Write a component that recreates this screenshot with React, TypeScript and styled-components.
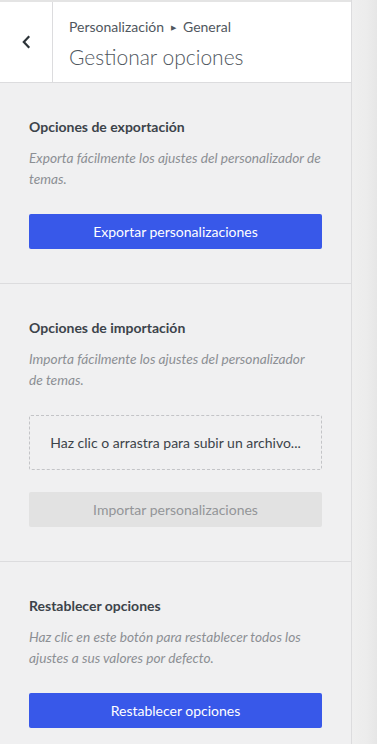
import * as React from "react";
import styled, { createGlobalStyle } from "styled-components";

const GlobalStyle = createGlobalStyle`
  html, body {
    margin: 0;
    padding: 0;
    height: 100%;
  }
  body {
    font-family: Lato, "Noto Sans", sans-serif;
    background: #eeeeee;
  }
  #root {
    height: 100%;
  }
`;

const Layout = styled.div`
  display: flex;
  height: 100%;
  overflow: hidden;
`;

const Sidebar = styled.aside`
  width: 351px;
  flex-shrink: 0;
  background: #f0f0f1;
  border-right: 1px solid #dcdcde;
  display: flex;
  flex-direction: column;
  & > * {
    flex-shrink: 0;
  }
`;

const Preview = styled.div`
  flex: 1;
  background: linear-gradient(90deg, #efefef 0%, #ececec 60%, #e6e6e6 100%);
`;

const Header = styled.header`
  display: flex;
  height: 80px;
  background: #fff;
  border-top: 2px solid #e4e4e4;
  border-bottom: 1px solid #dcdcde;
`;

const BackButton = styled.button`
  width: 53px;
  flex-shrink: 0;
  border: none;
  border-right: 1px solid #dcdcde;
  background: #fff;
  display: flex;
  align-items: center;
  justify-content: center;
  padding: 0;
  cursor: pointer;
`;

const TitleBlock = styled.div`
  display: flex;
  flex-direction: column;
  justify-content: center;
  padding-left: 16px;
  padding-top: 4px;
  color: #50575e;
`;

const Crumb = styled.div`
  font-size: 14px;
  line-height: 20px;
  display: flex;
  align-items: center;
  gap: 7px;
`;

const CrumbArrow = styled.span`
  font-size: 7px;
  line-height: 1;
`;

const Title = styled.h1`
  margin: 6px 0 0;
  font-size: 21px;
  line-height: 28px;
  font-weight: 300;
  color: #50575e;
`;

const Section = styled.section<{ $last?: boolean }>`
  padding: 34px 29px;
  border-bottom: ${(p) => (p.$last ? "none" : "1px solid #dcdcde")};
  display: flex;
  flex-direction: column;
`;

const SectionTitle = styled.h2`
  margin: 0;
  font-size: 14px;
  line-height: 20px;
  font-weight: 700;
  color: #3c434a;
`;

const Description = styled.p`
  margin: 10px 0 25px;
  font-size: 13.7px;
  line-height: 21px;
  font-style: italic;
  color: #8c8f94;
`;

const Button = styled.button<{ $disabled?: boolean }>`
  height: 35px;
  width: 100%;
  border: none;
  border-radius: 2px;
  font-family: inherit;
  font-size: 14px;
  background: ${(p) => (p.$disabled ? "#e2e2e2" : "#3858e9")};
  color: ${(p) => (p.$disabled ? "#939598" : "#fff")};
  cursor: ${(p) => (p.$disabled ? "default" : "pointer")};
`;

const DropZone = styled.div`
  height: 53px;
  border: 1px dashed #c3c4c7;
  border-radius: 2px;
  display: flex;
  align-items: center;
  justify-content: center;
  font-size: 14px;
  color: #3c434a;
  margin-bottom: 22px;
`;

function Chevron() {
  return (
    <svg width="10" height="14" viewBox="0 0 10 14">
      <path
        d="M7.5 2 L2.8 7 L7.5 12"
        fill="none"
        stroke="#2c3338"
        strokeWidth="2.2"
        strokeLinecap="square"
      />
    </svg>
  );
}

export default function App() {
  return (
    <>
      <GlobalStyle />
      <Layout>
        <Sidebar>
          <Header>
            <BackButton aria-label="Volver">
              <Chevron />
            </BackButton>
            <TitleBlock>
              <Crumb>
                Personalización <CrumbArrow>▶</CrumbArrow> General
              </Crumb>
              <Title>Gestionar opciones</Title>
            </TitleBlock>
          </Header>

          <Section>
            <SectionTitle>Opciones de exportación</SectionTitle>
            <Description>
              Exporta fácilmente los ajustes del personalizador de temas.
            </Description>
            <Button>Exportar personalizaciones</Button>
          </Section>

          <Section>
            <SectionTitle>Opciones de importación</SectionTitle>
            <Description>
              Importa fácilmente los ajustes del personalizador
              <br />
              de temas.
            </Description>
            <DropZone>Haz clic o arrastra para subir un archivo...</DropZone>
            <Button $disabled>Importar personalizaciones</Button>
          </Section>

          <Section $last>
            <SectionTitle>Restablecer opciones</SectionTitle>
            <Description>
              Haz clic en este botón para restablecer todos los ajustes a sus
              valores por defecto.
            </Description>
            <Button>Restablecer opciones</Button>
          </Section>
        </Sidebar>
        <Preview />
      </Layout>
    </>
  );
}
